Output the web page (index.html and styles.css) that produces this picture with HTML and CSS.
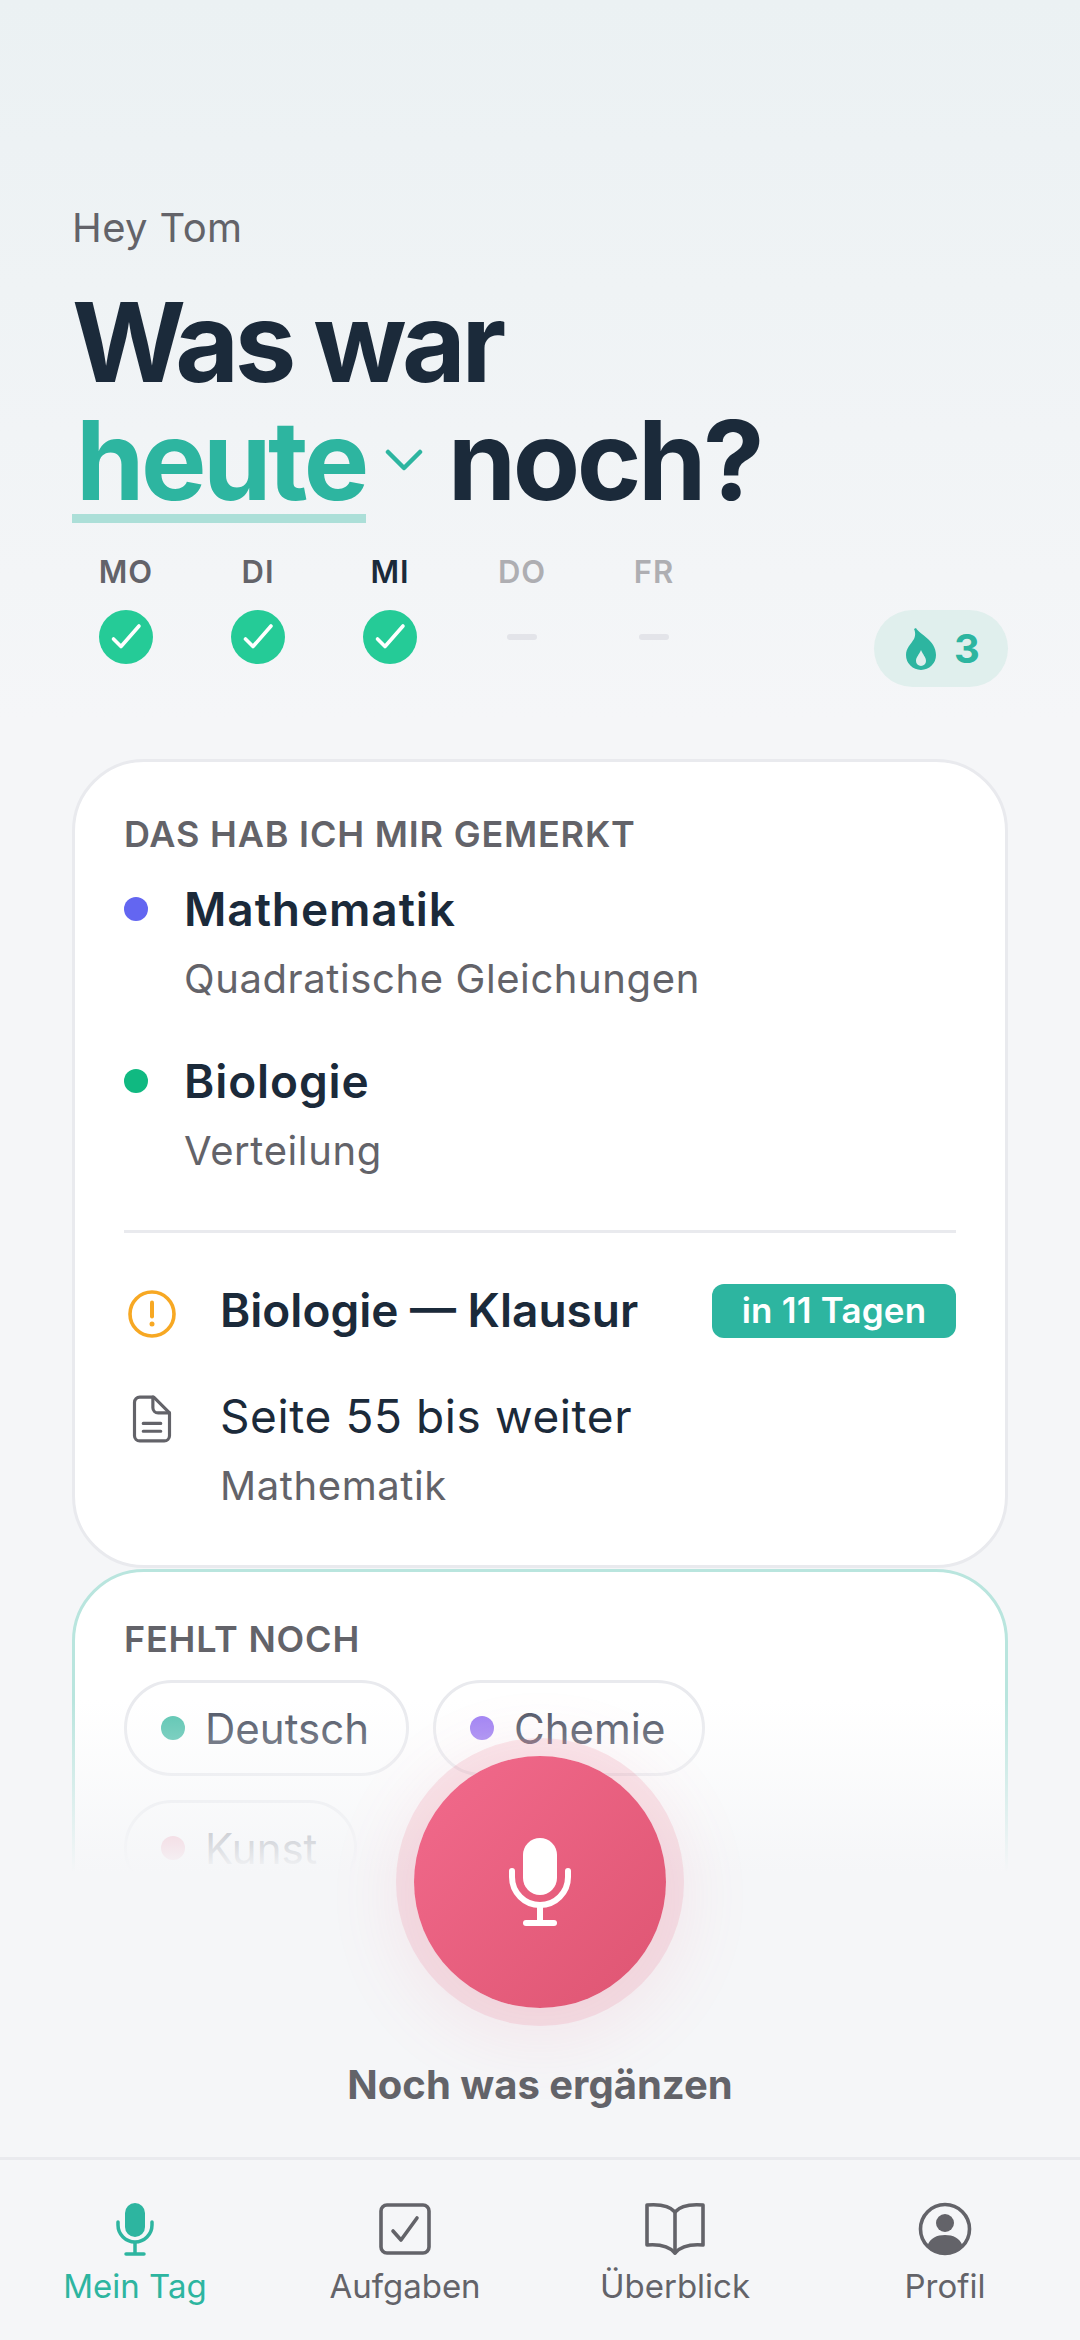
FILE: index.html
```html
<!DOCTYPE html>
<html lang="de">
  <head>
    <meta charset="UTF-8" />
    <meta name="viewport" content="width=device-width, initial-scale=1.0" />
    <title>Mein Tag</title>
    <link rel="stylesheet" href="styles.css">
  </head>
  <body>
    <div class="screen">
      <div class="content">
        <p class="greeting">Hey Tom</p>
        <h1 class="title">
          <span class="title-line">Was war</span>
          <span class="title-line">
            <span class="title-day">heute</span>
            <svg class="title-chevron" viewBox="0 0 38 22" fill="none" stroke="currentColor" stroke-width="4.500" stroke-linecap="round" stroke-linejoin="round"><path d="M3 3l16 16L35 3" /></svg>
            <span class="title-rest">noch?</span>
          </span>
        </h1>

        <div class="week">
          <div class="days">
            <div class="day">
              <span class="day-name">MO</span>
              <svg class="day-mark" viewBox="0 0 54 54"><circle cx="27" cy="27" r="27" fill="#25cb97" /><path d="M14.500 29l7.500 7.500L40 16" fill="none" stroke="#fff" stroke-width="3.600" stroke-linecap="round" stroke-linejoin="round" /></svg>
            </div>
            <div class="day">
              <span class="day-name">DI</span>
              <svg class="day-mark" viewBox="0 0 54 54"><circle cx="27" cy="27" r="27" fill="#25cb97" /><path d="M14.500 29l7.500 7.500L40 16" fill="none" stroke="#fff" stroke-width="3.600" stroke-linecap="round" stroke-linejoin="round" /></svg>
            </div>
            <div class="day day-today">
              <span class="day-name">MI</span>
              <svg class="day-mark" viewBox="0 0 54 54"><circle cx="27" cy="27" r="27" fill="#25cb97" /><path d="M14.500 29l7.500 7.500L40 16" fill="none" stroke="#fff" stroke-width="3.600" stroke-linecap="round" stroke-linejoin="round" /></svg>
            </div>
            <div class="day day-open">
              <span class="day-name">DO</span>
              <span class="day-dash"></span>
            </div>
            <div class="day day-open">
              <span class="day-name">FR</span>
              <span class="day-dash"></span>
            </div>
          </div>
          <div class="streak">
            <svg class="streak-icon" viewBox="0 0 30 42"><path fill-rule="evenodd" d="M10 0C13 6 30 12 30 27A15 15 0 0 1 0 27C0 20 5 16 8 11C10 7 9 3 8 1ZM15 22C17 27 20 29 20 33A5 5 0 0 1 10 33C10 29 13 27 15 22Z" /></svg>
            <span>3</span>
          </div>
        </div>

        <section class="card card-notes">
          <h2 class="card-label">DAS HAB ICH MIR GEMERKT</h2>
          <div class="note">
            <span class="dot dot-math"></span>
            <div>
              <div class="note-subject">Mathematik</div>
              <div class="note-topic">Quadratische Gleichungen</div>
            </div>
          </div>
          <div class="note">
            <span class="dot dot-bio"></span>
            <div>
              <div class="note-subject">Biologie</div>
              <div class="note-topic">Verteilung</div>
            </div>
          </div>
          <hr class="divider" />
          <div class="task task-exam">
            <svg class="task-icon" viewBox="0 0 48 48" fill="none"><circle cx="24" cy="24" r="22" stroke="#f7a823" stroke-width="3.600" /><path d="M24 12.500v14" stroke="#f7a823" stroke-width="4" stroke-linecap="round" /><circle cx="24" cy="34" r="2.500" fill="#f7a823" /></svg>
            <span class="task-name">Biologie — Klausur</span>
            <span class="task-badge">in 11 Tagen</span>
          </div>
          <div class="task task-read">
            <svg class="task-icon" viewBox="0 0 48 54" fill="none" stroke="#636369" stroke-width="3.600" stroke-linecap="round" stroke-linejoin="round"><path d="M12 2h14l18 18v26a6 6 0 0 1-6 6H10a6 6 0 0 1-6-6V8a6 6 0 0 1 6-6z" /><path d="M25 2v12a6 6 0 0 0 6 6h13" /><path d="M14 32h20M14 41h20" /></svg>
            <div>
              <div class="task-title">Seite 55 bis weiter</div>
              <div class="note-topic">Mathematik</div>
            </div>
          </div>
        </section>

        <section class="card card-missing">
          <h2 class="card-label">FEHLT NOCH</h2>
          <div class="chips">
            <span class="chip"><span class="dot dot-de"></span>Deutsch</span>
            <span class="chip"><span class="dot dot-chem"></span>Chemie</span>
            <span class="chip"><span class="dot dot-art"></span>Kunst</span>
          </div>
        </section>
      </div>

      <div class="dock">
        <button class="mic-button">
          <svg viewBox="0 0 64 90" width="64" height="90" fill="none" stroke="#fff" stroke-width="6" stroke-linecap="round"><rect x="15" y="1" width="34" height="57" rx="17" fill="#fff" stroke="none" /><path d="M4 34v6a28 28 0 0 0 56 0v-6" /><path d="M32 70v15" /><path d="M18 86h28" /></svg>
        </button>
        <p class="mic-caption">Noch was ergänzen</p>
        <nav class="tabs">
          <a class="tab tab-active">
            <svg viewBox="0 0 40 54" width="40" height="54" fill="none" stroke="currentColor" stroke-width="3.500" stroke-linecap="round"><rect x="10" y="1" width="20" height="34" rx="10" fill="currentColor" stroke="none" /><path d="M3 20v3a17 17 0 0 0 34 0v-3" /><path d="M20 41v10" /><path d="M11 52h18" /></svg>
            <span>Mein Tag</span>
          </a>
          <a class="tab">
            <svg viewBox="0 0 54 54" width="54" height="54" fill="none" stroke="currentColor" stroke-width="3.600" stroke-linecap="round" stroke-linejoin="round"><rect x="3" y="3" width="48" height="48" rx="6" /><path d="M15 29l8 9 16-22" /></svg>
            <span>Aufgaben</span>
          </a>
          <a class="tab">
            <svg viewBox="0 0 64 54" width="64" height="54" fill="none" stroke="currentColor" stroke-width="3.600" stroke-linecap="round" stroke-linejoin="round"><path d="M32 10C27 4 16 2 4 3v40c12-1 22 1 28 8 6-7 16-9 28-8V3C48 2 37 4 32 10z" /><path d="M32 10v41" /></svg>
            <span>Überblick</span>
          </a>
          <a class="tab">
            <svg viewBox="0 0 54 54" width="54" height="54" fill="none"><circle cx="27" cy="27" r="24.500" stroke="currentColor" stroke-width="3.600" /><circle cx="27" cy="21" r="9" fill="currentColor" /><path d="M9.500 43.500C12 36 19 33 27 33s15 3 17.500 10.500A24 24 0 0 1 27 51a24 24 0 0 1-17.500-7.500z" fill="currentColor" /></svg>
            <span>Profil</span>
          </a>
        </nav>
      </div>
    </div>
  </body>
</html>
```

FILE: styles.css
```css
* {
  box-sizing: border-box;
}
body {
  margin: 0;
  font-family: Inter, "Noto Sans", sans-serif;
  color: #1b2a3a;
  background: #f5f6f8;
}
p,
h1,
h2 {
  margin: 0;
}
.screen {
  position: relative;
  width: 1080px;
  height: 2340px;
  overflow: hidden;
  background: linear-gradient(#ebf1f3 0, #f5f6f8 720px);
}
.content {
  padding: 204px 72px 0;
}
.greeting {
  font-size: 40px;
  line-height: 48px;
  letter-spacing: 0.400px;
  color: #636369;
}
.title {
  margin-top: 31px;
  font-size: 110px;
  line-height: 118px;
  font-weight: 700;
  letter-spacing: -4.500px;
}
.title-line {
  display: flex;
  align-items: center;
}
.title-day {
  padding: 0 0 4px 4px;
  margin-bottom: -4px;
  color: #2db5a0;
  letter-spacing: -3.500px;
  background: linear-gradient(#acdfd8, #acdfd8) left bottom / 100% 9px no-repeat;
}
.title-rest {
  letter-spacing: -3.500px;
}
.title-chevron {
  width: 38px;
  height: 22px;
  margin: 0 25px 0 19px;
  color: #2db5a0;
}
.week {
  display: flex;
  justify-content: space-between;
  align-items: flex-end;
  margin-top: 35px;
}
.days {
  display: flex;
  margin-left: -12px;
}
.day {
  display: flex;
  flex-direction: column;
  align-items: center;
  width: 132px;
  height: 133px;
}
.day-name {
  margin-bottom: 20px;
  font-size: 31px;
  line-height: 36px;
  font-weight: 600;
  letter-spacing: 1px;
  color: #636369;
}
.day-today .day-name {
  color: #1b2a3a;
}
.day-open .day-name {
  color: #aeaeb2;
}
.day-mark {
  width: 54px;
  height: 54px;
}
.day-dash {
  width: 30px;
  height: 6px;
  margin-top: 24px;
  border-radius: 3px;
  background: #e3e4e9;
}
.streak {
  display: flex;
  align-items: center;
  justify-content: center;
  gap: 18px;
  width: 134px;
  height: 77px;
  padding-left: 4px;
  border-radius: 39px;
  background: #e0efed;
  font-size: 40px;
  font-weight: 700;
  color: #2db5a0;
}
.streak-icon {
  width: 30px;
  height: 42px;
  fill: #2db5a0;
}
.card {
  border: 3px solid #e9eaee;
  border-radius: 72px;
  background: #fff;
  padding: 50px 49px 0;
}
.card-notes {
  height: 809px;
  margin-top: 72px;
}
.card-missing {
  height: 500px;
  margin-top: 1px;
  padding-top: 45px;
  border-color: #b9e5de;
}
.card-label {
  font-size: 36px;
  line-height: 44px;
  font-weight: 600;
  letter-spacing: 0.800px;
  color: #636369;
}
.note {
  display: flex;
  gap: 36px;
  margin-top: 23px;
}
.note + .note {
  margin-top: 46px;
}
.dot {
  flex: none;
  width: 24px;
  height: 24px;
  border-radius: 50%;
}
.note .dot {
  margin-top: 18px;
}
.dot-math {
  background: #6366f1;
}
.dot-bio {
  background: #10b981;
}
.dot-de {
  background: #58c4b0;
}
.dot-chem {
  background: #9c7cf4;
}
.dot-art {
  background: #f08aa4;
}
.note-subject {
  font-size: 46px;
  line-height: 60px;
  font-weight: 600;
  letter-spacing: 0.900px;
}
.note-topic {
  margin-top: 14px;
  font-size: 40px;
  line-height: 52px;
  letter-spacing: 0.600px;
  color: #636369;
}
.divider {
  height: 3px;
  margin: 53px 0 0;
  border: 0;
  background: #e9eaee;
}
.task {
  display: flex;
  gap: 44px;
}
.task-icon {
  flex: none;
  width: 48px;
  margin-left: 4px;
}
.task-exam {
  align-items: center;
  margin-top: 47px;
}
.task-exam .task-icon {
  margin-top: 8px;
}
.task-read {
  margin-top: 46px;
}
.task-read .task-icon {
  width: 42px;
  height: 54px;
  margin: 6px 3px 0 7px;
}
.task-name {
  flex: 1;
  font-size: 46px;
  line-height: 60px;
  font-weight: 600;
}
.task-badge {
  width: 244px;
  height: 54px;
  margin-top: 2px;
  border-radius: 12px;
  background: #2db5a0;
  color: #fff;
  font-size: 35px;
  line-height: 52px;
  font-weight: 600;
  letter-spacing: 0.200px;
  text-align: center;
}
.task-title {
  font-size: 46px;
  line-height: 60px;
  letter-spacing: 0.600px;
}
.chips {
  display: flex;
  flex-wrap: wrap;
  gap: 24px;
  width: 620px;
  margin-top: 19px;
}
.chip {
  display: flex;
  align-items: center;
  gap: 20px;
  height: 96px;
  padding: 0 37px 0 34px;
  border: 3px solid #e9eaee;
  border-radius: 48px;
  font-size: 42px;
  color: #4c5363;
}
.dock {
  position: absolute;
  top: 1700px;
  left: 0;
  width: 1080px;
  height: 640px;
  display: flex;
  flex-direction: column;
  align-items: center;
  padding-top: 56px;
  background: linear-gradient(rgba(245, 246, 248, 0) 0, #f5f6f8 172px);
}
.mic-button {
  display: flex;
  align-items: center;
  justify-content: center;
  width: 252px;
  height: 252px;
  border: 0;
  border-radius: 50%;
  background: linear-gradient(135deg, #f26a8c, #de5572);
  box-shadow: 0 0 0 18px rgba(236, 100, 130, 0.15), 0 14px 70px 20px rgba(236, 100, 130, 0.1);
}
.mic-caption {
  margin-top: 52px;
  font-size: 40px;
  line-height: 50px;
  font-weight: 700;
  color: #636369;
}
.tabs {
  display: grid;
  grid-template-columns: repeat(4, 1fr);
  width: 100%;
  height: 183px;
  margin-top: auto;
  padding-top: 42px;
  border-top: 3px solid #e9eaee;
}
.tab {
  display: flex;
  flex-direction: column;
  align-items: center;
  gap: 8px;
  font-size: 33px;
  line-height: 44px;
  color: #636369;
}
.tab-active {
  color: #2db5a0;
}
```
